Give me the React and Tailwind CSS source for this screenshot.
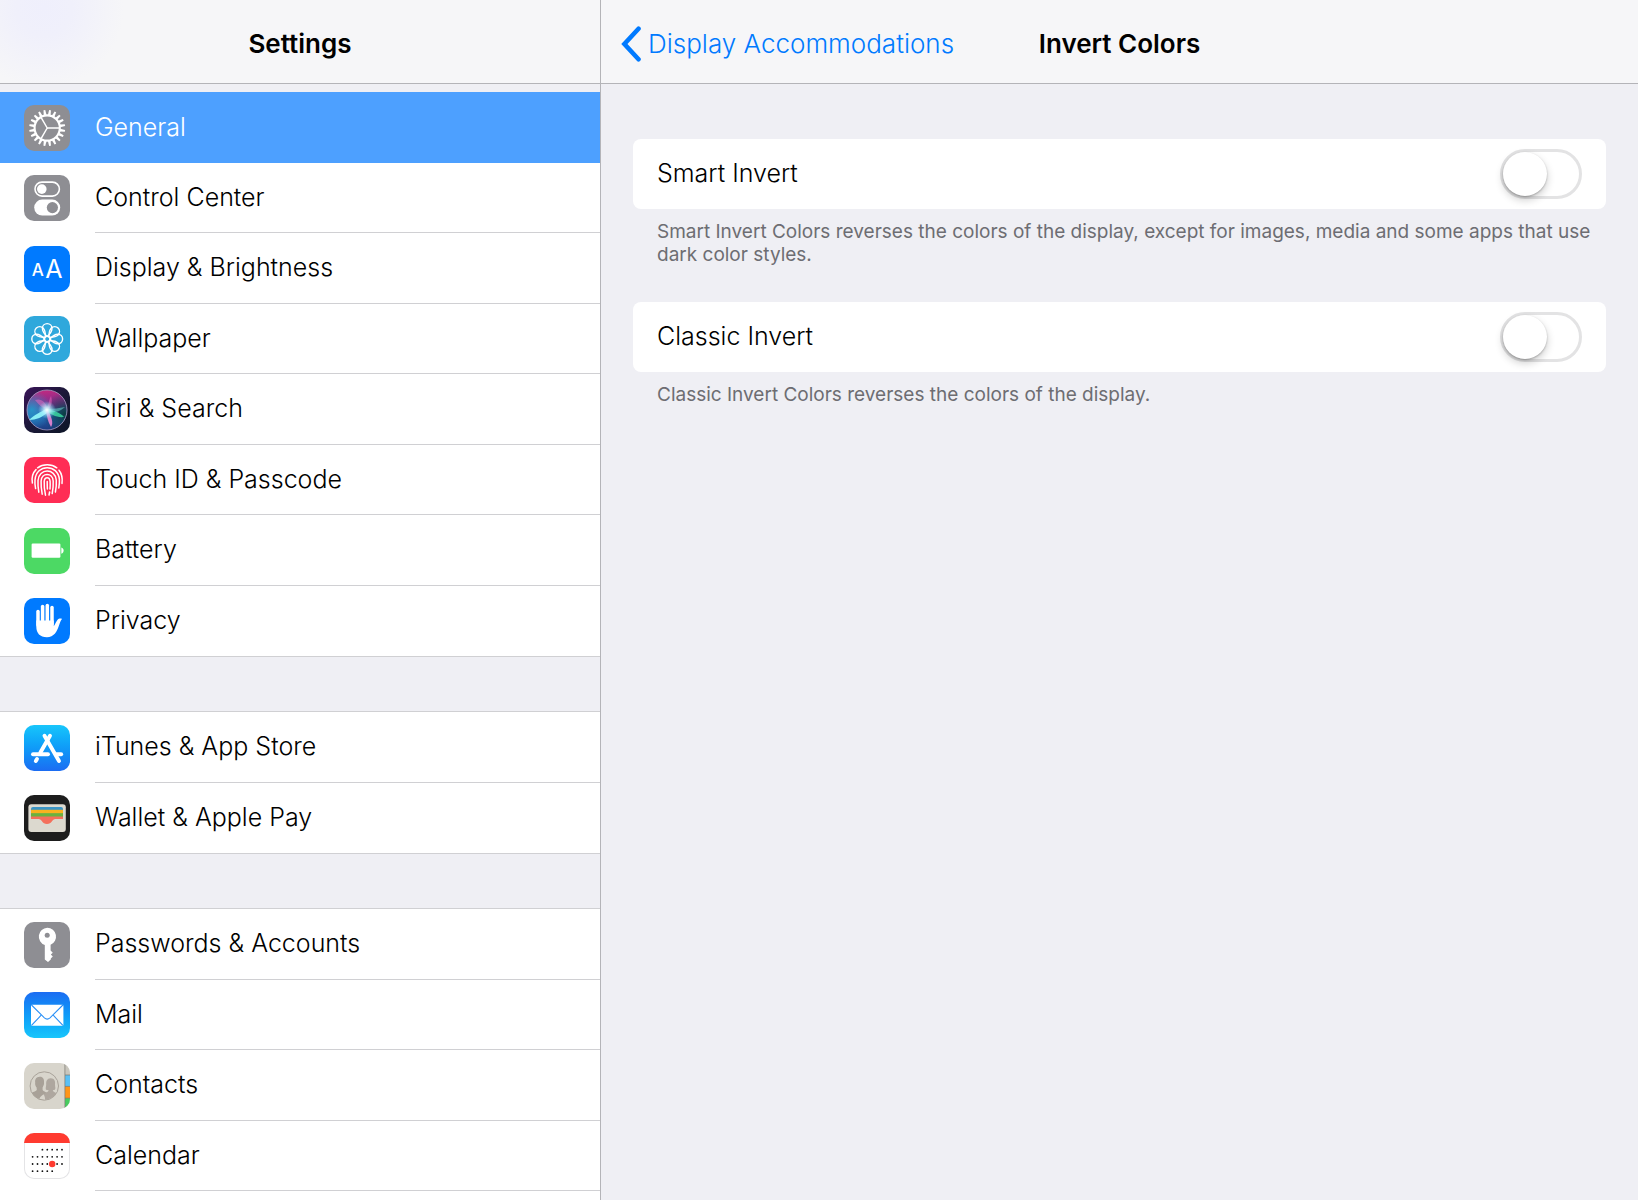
import { useState } from 'react';

const GEAR_TEETH = Array.from({ length: 20 }, (_, i) => i * 18);
const PETALS = [0, 45, 90, 135, 180, 225, 270, 315];
const CALENDAR_COLS = [8.6, 13.5, 18.4, 23.3, 28.2, 33.1, 38];
const CALENDAR_ROWS = [
  { y: 16.7, from: 2, to: 6 },
  { y: 23.8, from: 0, to: 6 },
  { y: 31, from: 0, to: 6 },
  { y: 38.2, from: 0, to: 4 },
];

function IconTile({ className = '', children }) {
  return (
    <svg
      viewBox="0 0 46 46"
      aria-hidden="true"
      className={`size-[46px] shrink-0 rounded-[10px] ${className}`}
    >
      {children}
    </svg>
  );
}

function GeneralIcon() {
  return (
    <IconTile className="bg-[#8e8e93]">
      <g transform="translate(23.2 23)">
        {GEAR_TEETH.map((angle) => (
          <path key={angle} d="M-1.4 -13 L-0.9 -18 H0.9 L1.4 -13 Z" fill="#fff" transform={`rotate(${angle + 9})`} />
        ))}
        <circle r="12.6" fill="none" stroke="#fff" strokeWidth="2.1" />
        <path d="M0 0 H12 M0 0 L-6 -10.4 M0 0 L-6 10.4" stroke="#fff" strokeWidth="1.5" />
      </g>
    </IconTile>
  );
}

function ControlCenterIcon() {
  return (
    <IconTile className="bg-[#8e8e93]">
      <rect x="11" y="7.1" width="24.4" height="14" rx="7" fill="none" stroke="#fff" strokeWidth="1.6" />
      <circle cx="17.8" cy="14.1" r="4.8" fill="#fff" />
      <rect x="10.2" y="24.6" width="26" height="16" rx="8" fill="#fff" />
      <circle cx="28.4" cy="32.6" r="5.6" fill="#8e8e93" />
    </IconTile>
  );
}

function DisplayIcon() {
  return (
    <IconTile className="bg-[#007aff]">
      <g fill="#fff" fontFamily="Inter, sans-serif" textAnchor="middle">
        <text x="13.8" y="30" fontSize="17" fontWeight="500">A</text>
        <text x="29.8" y="32" fontSize="25">A</text>
      </g>
    </IconTile>
  );
}

function WallpaperIcon() {
  return (
    <IconTile className="bg-[#2fa8dc]">
      <g transform="translate(23.2 23)" fill="none" stroke="#fff" strokeWidth="1.4">
        {PETALS.map((angle) => (
          <path
            key={angle}
            d="M0 -2.6 C-2.6 -5 -4.8 -7.6 -4.8 -10.6 A4.8 4.8 0 0 1 4.8 -10.6 C4.8 -7.6 2.6 -5 0 -2.6 Z"
            transform={`rotate(${angle})`}
          />
        ))}
        <circle r="2.8" />
      </g>
    </IconTile>
  );
}

function SiriIcon() {
  return (
    <IconTile>
      <defs>
        <linearGradient id="siriBack" x1="0" y1="0" x2="1" y2="1">
          <stop offset="0" stopColor="#3a1458" />
          <stop offset="0.5" stopColor="#1b1838" />
          <stop offset="1" stopColor="#0c1526" />
        </linearGradient>
        <linearGradient id="siriOrb" x1="0.4" y1="0" x2="0.5" y2="1">
          <stop offset="0" stopColor="#c22a80" />
          <stop offset="0.4" stopColor="#7a2d90" />
          <stop offset="0.6" stopColor="#2468b4" />
          <stop offset="1" stopColor="#1d3a80" />
        </linearGradient>
        <radialGradient id="siriTeal" cx="0.12" cy="0.5" r="0.5">
          <stop offset="0" stopColor="#2695c8" />
          <stop offset="1" stopColor="#2695c8" stopOpacity="0" />
        </radialGradient>
        <radialGradient id="siriDark" cx="0.95" cy="0.6" r="0.55">
          <stop offset="0" stopColor="#0c3d42" />
          <stop offset="1" stopColor="#0c3d42" stopOpacity="0" />
        </radialGradient>
        <radialGradient id="siriGlow">
          <stop offset="0" stopColor="#fff" />
          <stop offset="0.35" stopColor="#c6f4ff" stopOpacity="0.8" />
          <stop offset="1" stopColor="#7fe0ff" stopOpacity="0" />
        </radialGradient>
      </defs>
      <rect width="46" height="46" fill="url(#siriBack)" />
      <circle cx="23" cy="23" r="20" fill="url(#siriOrb)" />
      <circle cx="23" cy="23" r="20" fill="url(#siriTeal)" />
      <circle cx="23" cy="23" r="20" fill="url(#siriDark)" />
      <path d="M22 22 C16 20 13 15 11 13 C17 11 22 15 23 21 C25 16 25 12 27 9 C29 15 27 20 24 23 Z" fill="#f06ac0" opacity="0.5" />
      <path d="M22 21 C29 24 36 25 40 30 C33 31 26 27 22 24 Z" fill="#3fe0a4" opacity="0.8" />
      <path d="M23 22 C30 22 35 21 41 20 C36 25 28 26 23 25 Z" fill="#72e4d8" opacity="0.5" />
      <path d="M22 22 C17 25 11 27 5 33 C12 33 19 30 24 25 Z" fill="#8ef4f8" opacity="0.95" />
      <path d="M22 24 C23 30 24 35 27 40 C30 36 27 29 24 23 Z" fill="#f58ad8" opacity="0.85" />
      <circle cx="23" cy="23" r="9" fill="url(#siriGlow)" />
      <circle cx="23" cy="23" r="20" fill="none" stroke="#a79bc4" strokeWidth="1" opacity="0.8" />
    </IconTile>
  );
}

function TouchIdIcon() {
  return (
    <IconTile className="bg-[#ff2d55]">
      <g fill="none" stroke="#fff" strokeWidth="1.5" strokeLinecap="round">
        <path d="M13.6 10.8 C19 6.8 27.4 6.8 32.8 10.8" />
        <path d="M8.4 26 C7.4 20.5 9 15.6 12 12.6" />
        <path d="M35 13.2 C37.6 16.4 38.8 20.5 38 26.4" />
        <path d="M11.6 31.6 C10.9 28 10.7 26 11 23 C12 6.6 34.2 6.6 35.4 22.5 C35.6 25.5 35.3 28 34.8 31" />
        <path d="M14.8 35.2 C14 30.5 13.8 27 14 23.5 C14.8 11 31.4 11 32.3 23.2 C32.5 27.5 32.2 31 31.4 35" />
        <path d="M18.2 37.2 C17.2 32 16.9 28 17.1 24 C17.6 15.2 28.6 15.2 29.2 24 C29.4 28.5 29 32.5 28.2 36.6" />
        <path d="M21.5 38.2 C20.4 33 20 28 20.2 24.4 C20.6 19.6 25.7 19.6 26.1 24.4 C26.3 27.5 26.2 29.5 26 32" />
        <path d="M25.6 35 L25 38" />
        <path d="M23.2 24.5 C23.2 28 23.2 29 23.4 32" />
      </g>
    </IconTile>
  );
}

function BatteryIcon() {
  return (
    <IconTile className="bg-[#4cd964]">
      <rect x="7.6" y="15.6" width="28.8" height="14.2" rx="1.2" fill="#fff" />
      <path d="M37.3 19.6 C40.4 20.3 40.4 25.1 37.3 25.8 Z" fill="#fff" />
    </IconTile>
  );
}

function PrivacyIcon() {
  return (
    <IconTile className="bg-[#007aff]">
      <g stroke="#fff" strokeWidth="3.5" strokeLinecap="round">
        <path d="M14 13.4 V27" />
        <path d="M18.6 8.4 V26" />
        <path d="M23.3 7.6 V26" />
        <path d="M28 9.4 V26" />
      </g>
      <path
        d="M12.3 22.5 H29.8 V28.2 C31.2 26.6 32 23.6 33.4 22 C34.6 20.6 36.6 20.2 38 20.9 C36.6 22.4 35.8 25 34.8 28 C33 33.5 30 39.2 22.9 39.2 C16 39.2 12.3 35.3 12.3 28.5 Z"
        fill="#fff"
      />
    </IconTile>
  );
}

function AppStoreIcon() {
  return (
    <IconTile className="bg-linear-to-b from-[#19c6fb] to-[#1c6cf2]">
      <g stroke="#fff" strokeWidth="3.9" strokeLinecap="round">
        <path d="M26 10.8 L16.4 27.5" />
        <path d="M20.5 10.8 L35 36" />
        <path d="M9 29.3 H24" />
        <path d="M32.5 29.3 H37.2" />
        <path d="M13 34 L11.8 36" />
      </g>
    </IconTile>
  );
}

function WalletIcon() {
  return (
    <IconTile className="bg-[#1d1d1d]">
      <rect x="4.4" y="9.2" width="37.4" height="27.8" rx="3" fill="#dcd9cf" />
      <path d="M7 24 V14 Q7 12 9 12 H37 Q39 12 39 14 V24 Z" fill="#3a94c5" />
      <rect x="7" y="14.8" width="32" height="4" fill="#f9b21f" />
      <rect x="7" y="18.2" width="32" height="4" fill="#6ab23e" />
      <path d="M7 21.5 H39 V24 H31.5 C28 24 28 29 23 29 C18 29 18 24 14.5 24 H7 Z" fill="#f4705c" />
    </IconTile>
  );
}

function KeyIcon() {
  return (
    <IconTile className="bg-[#8e8e93]">
      <path
        d="M23.3 5.7 A8.9 8.9 0 0 1 26.6 22.8 V28.6 L28.8 30.8 L26.8 32.6 L28.8 34.6 L26.8 36.6 V37.4 L24 40 L20.8 37.6 V23 A8.9 8.9 0 0 1 23.3 5.7 Z"
        fill="#fff"
      />
      <circle cx="23.2" cy="13.2" r="2.5" fill="#8e8e93" />
    </IconTile>
  );
}

function MailIcon() {
  return (
    <IconTile className="bg-linear-to-b from-[#1c6cf2] to-[#19c6fb]">
      <rect x="7" y="12.7" width="32.4" height="21" rx="1.2" fill="#fff" />
      <g fill="none" stroke="#2a8ff6" strokeWidth="1.1">
        <path d="M7.5 13 L20.4 25.8 Q23.2 28.4 26 25.8 L38.9 13" />
        <path d="M7.5 33.4 L17.2 23.2 M38.9 33.4 L29.2 23.2" />
      </g>
    </IconTile>
  );
}

function ContactsIcon() {
  return (
    <IconTile className="bg-[#d8d5cc]">
      <rect x="41" y="0" width="5" height="12" fill="#c9c6bd" />
      <rect x="41" y="12" width="5" height="11.4" fill="#5ac0f5" />
      <rect x="41" y="23.4" width="5" height="11.8" fill="#ff9518" />
      <rect x="41" y="35.2" width="5" height="11" fill="#47cc5e" />
      <path d="M40.9 0 V46 M41 12 H46 M41 23.4 H46 M41 35.2 H46" stroke="#77756f" strokeWidth="0.7" />
      <circle cx="20.3" cy="23" r="14.2" fill="none" stroke="#a8a299" strokeWidth="1" />
      <path
        d="M26.5 15.2 C30.2 15 31.6 18 31 21.5 C31 24 32 25.5 30.8 26.8 L28.8 27.2 C28.8 29 31.4 29.2 32.2 30.2 C29.6 34.2 25.6 36.6 21 36.8 C21.5 33 19 31 18.8 30 C21 29.2 24.5 29.4 24.6 27.2 L22 26.8 C21.4 25.5 22 24 22.2 21.5 C22 18 23 15.4 26.5 15.2 Z"
        fill="#aea79f"
      />
      <path
        d="M15.6 13.8 C19 13.6 20.4 16.2 20 19.4 C20.4 21.4 19.4 22.6 18.6 24.6 L18.6 27 C19.6 28.6 21.8 28.8 22.4 29.8 C19 31.4 16.4 33.2 15.2 36 C11.8 34.8 9.4 32.6 8 29.8 C9.4 28.6 12.2 28.4 12.8 27 L12.6 24.6 C11.6 22.8 10.8 21.4 11.2 19.4 C10.8 16 12.4 14 15.6 13.8 Z"
        fill="#a8a198"
      />
    </IconTile>
  );
}

function CalendarIcon() {
  return (
    <IconTile className="bg-white ring-1 ring-[#e4e4e6] ring-inset">
      <rect width="46" height="10" fill="#ff3b30" />
      {CALENDAR_ROWS.map((row) =>
        CALENDAR_COLS.slice(row.from, row.to + 1).map((x) => (
          <circle key={`${x}-${row.y}`} cx={x} cy={row.y} r="0.9" fill="#111" />
        ))
      )}
      <circle cx="28.2" cy="31" r="3.2" fill="#ff3b30" />
    </IconTile>
  );
}

const GROUPS = [
  [
    { label: 'General', icon: GeneralIcon, selected: true },
    { label: 'Control Center', icon: ControlCenterIcon },
    { label: 'Display & Brightness', icon: DisplayIcon },
    { label: 'Wallpaper', icon: WallpaperIcon },
    { label: 'Siri & Search', icon: SiriIcon },
    { label: 'Touch ID & Passcode', icon: TouchIdIcon },
    { label: 'Battery', icon: BatteryIcon },
    { label: 'Privacy', icon: PrivacyIcon },
  ],
  [
    { label: 'iTunes & App Store', icon: AppStoreIcon },
    { label: 'Wallet & Apple Pay', icon: WalletIcon },
  ],
  [
    { label: 'Passwords & Accounts', icon: KeyIcon },
    { label: 'Mail', icon: MailIcon },
    { label: 'Contacts', icon: ContactsIcon },
    { label: 'Calendar', icon: CalendarIcon },
  ],
];

function SidebarRow({ item, divider }) {
  const Icon = item.icon;
  return (
    <li className="flex odd:h-[71px] even:h-[70px]">
      <a
        href="#"
        aria-current={item.selected ? 'page' : undefined}
        className={`flex min-w-0 flex-1 items-center gap-[25px] pl-6 ${
          item.selected ? 'bg-[#4da0ff] text-white' : 'text-black'
        }`}
      >
        <Icon />
        <span
          className={`flex flex-1 items-center self-stretch truncate text-[25px] font-[350] ${
            divider ? 'border-b border-[#d0d0d3]' : ''
          }`}
        >
          {item.label}
        </span>
      </a>
    </li>
  );
}

function Sidebar() {
  return (
    <aside className="flex w-[601px] shrink-0 flex-col overflow-hidden border-r border-[#b4b4b8]">
      <header className="flex h-[84px] shrink-0 items-center justify-center border-b border-[#b4b4b8] bg-[#f6f6f8] bg-[radial-gradient(circle_at_44px_8px,#efeffc_0px,#f0f0fb_28px,#f6f6f8_80px)] pt-1">
        <h1 className="text-[26px] font-semibold">Settings</h1>
      </header>
      <nav aria-label="Settings" className="flex flex-1 flex-col gap-14 overflow-hidden pt-2">
        {GROUPS.map((group, i) => {
          const last = i === GROUPS.length - 1;
          return (
            <ul
              key={group[0].label}
              className={`bg-white ${i > 0 ? 'shadow-[0_-1px_0_#d0d0d3,0_1px_0_#d0d0d3]' : 'shadow-[0_1px_0_#d0d0d3]'} ${
                last ? 'flex-1' : ''
              }`}
            >
              {group.map((item, j) => (
                <SidebarRow
                  key={item.label}
                  item={item}
                  divider={!item.selected && (last || j < group.length - 1)}
                />
              ))}
            </ul>
          );
        })}
      </nav>
    </aside>
  );
}

function SwitchSetting({ id, label, note, checked, onChange }) {
  return (
    <section>
      <div className="flex h-[70px] items-center justify-between rounded-lg bg-white px-6">
        <label htmlFor={id} className="text-[25px] font-[350]">{label}</label>
        <input
          id={id}
          type="checkbox"
          role="switch"
          aria-describedby={`${id}-note`}
          checked={checked}
          onChange={(e) => onChange(e.target.checked)}
          className="flex h-[50px] w-[82px] cursor-pointer appearance-none items-center rounded-full border-3 border-[#e3e3e4] bg-white transition-colors before:size-11 before:rounded-full before:bg-white before:shadow-[0_4px_8px_rgba(0,0,0,0.2),0_1px_2px_rgba(0,0,0,0.25)] checked:justify-end checked:border-[#4cd964] checked:bg-[#4cd964]"
        />
      </div>
      <p id={`${id}-note`} className="pt-[11px] pl-6 text-[19px] leading-[23px] text-[#6d6d72]">
        {note}
      </p>
    </section>
  );
}

export default function App() {
  const [smartInvert, setSmartInvert] = useState(false);
  const [classicInvert, setClassicInvert] = useState(false);

  return (
    <div className="flex h-screen overflow-hidden bg-[#efeff4] font-['Inter',sans-serif] text-black">
      <Sidebar />

      <main className="flex min-w-0 flex-1 flex-col">
        <header className="grid h-[84px] shrink-0 grid-cols-[1fr_auto_1fr] items-center border-b border-[#b4b4b8] bg-[#f6f6f8] px-5 pt-1">
          <a href="#" className="flex items-center gap-[7px] text-[26px] font-[350] text-[#007aff]">
            <svg viewBox="0 0 20 36" aria-hidden="true" className="h-9 w-5 shrink-0">
              <path d="M17.5 2.8 L3.4 18 L17.5 33.2" fill="none" stroke="currentColor" strokeWidth="4.6" strokeLinecap="round" strokeLinejoin="miter" />
            </svg>
            <span className="whitespace-nowrap">Display Accommodations</span>
          </a>
          <h2 className="text-[26px] font-semibold">Invert Colors</h2>
        </header>

        <div className="flex flex-col gap-9 px-8 pt-[55px]">
          <SwitchSetting
            id="smart-invert"
            label="Smart Invert"
            note="Smart Invert Colors reverses the colors of the display, except for images, media and some apps that use dark color styles."
            checked={smartInvert}
            onChange={setSmartInvert}
          />
          <SwitchSetting
            id="classic-invert"
            label="Classic Invert"
            note="Classic Invert Colors reverses the colors of the display."
            checked={classicInvert}
            onChange={setClassicInvert}
          />
        </div>
      </main>
    </div>
  );
}
